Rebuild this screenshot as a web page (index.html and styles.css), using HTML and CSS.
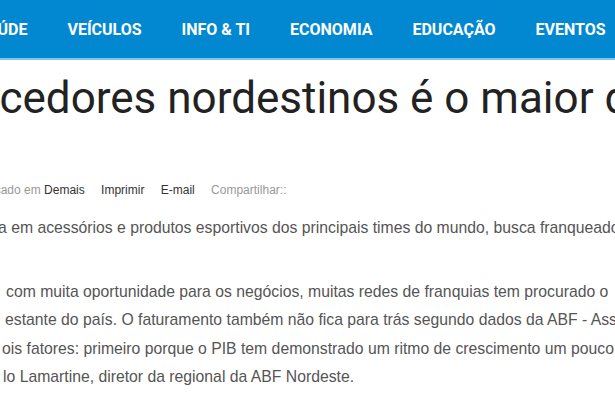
FILE: index.html
```html
<!DOCTYPE html>
<html>
	<head>
		<meta charset="UTF-8">
		<title>Fornecedores nordestinos</title>
		<link rel="stylesheet" href="styles.css">
	</head>
	<body>
		<div class="menu">
			<ul class="menu-list">
				<li>Saúde</li>
				<li>Veículos</li>
				<li>Info &amp; TI</li>
				<li>Economia</li>
				<li>Educação</li>
				<li>Eventos</li>
			</ul>
		</div>

		<div class="article">
			<h1 class="article-title">Fornecedores nordestinos é o maior desafio</h1>

			<div class="article-info">
				<span class="cat">Publicado em <a href="javascript:;">Demais</a></span>
				<a href="javascript:;" class="tool">Imprimir</a>
				<a href="javascript:;" class="tool">E-mail</a>
				<span class="share">Compartilhar::</span>
			</div>

			<div class="article-body">
				<p class="intro">a em acessórios e produtos esportivos dos principais times do mundo, busca franqueados</p>
				<p class="text">
					<span class="l1">com muita oportunidade para os negócios, muitas redes de franquias tem procurado o</span>
					<span class="l2">estante do país. O faturamento também não fica para trás segundo dados da ABF - Associação</span>
					<span class="l3">ois fatores: primeiro porque o PIB tem demonstrado um ritmo de crescimento um pouco maior</span>
					<span class="l4">lo Lamartine, diretor da regional da ABF Nordeste.</span>
				</p>
			</div>
		</div>
	</body>
</html>
```

FILE: styles.css
```css
* { margin: 0; padding: 0; box-sizing: border-box; }
body { margin: 0; background: #fff; overflow: hidden; font-family: Arial, "Liberation Sans", sans-serif; }
a { text-decoration: none; }

.menu { height: 60px; background: #0288d1; border-bottom: 2px solid #7fc6ec; overflow: hidden; }
.menu-list { display: flex; list-style: none; margin-left: -43px; white-space: nowrap; }
.menu-list li {
	padding: 1px 20px 0; line-height: 58px;
	font-family: Roboto, sans-serif; font-size: 16px; font-weight: bold;
	color: #fff; text-transform: uppercase;
}

.article { overflow: hidden; }
.article-title {
	margin: 10px 0 0 -112px; white-space: nowrap;
	font-family: Roboto, sans-serif; font-size: 44px; font-weight: normal; line-height: 56px;
	color: #222;
}

.article-info { margin: 54px 0 0 -32px; font-size: 12px; line-height: 20px; color: #999; white-space: nowrap; }
.article-info a { color: #333; }
.article-info .tool { margin-left: 13px; }
.article-info .share { margin-left: 13px; }

.article-body { font-size: 15.75px; color: #555; white-space: nowrap; }
.article-body .intro { margin: 18px 0 0 -2px; line-height: 20px; }
.article-body .text { margin-top: 40px; line-height: 28.3px; }
.article-body .text span { display: block; }
.article-body .l1 { margin-left: 6px; }
.article-body .l2 { margin-left: 5px; }
.article-body .l3 { margin-left: 2px; }
.article-body .l4 { margin-left: 3px; }
```
